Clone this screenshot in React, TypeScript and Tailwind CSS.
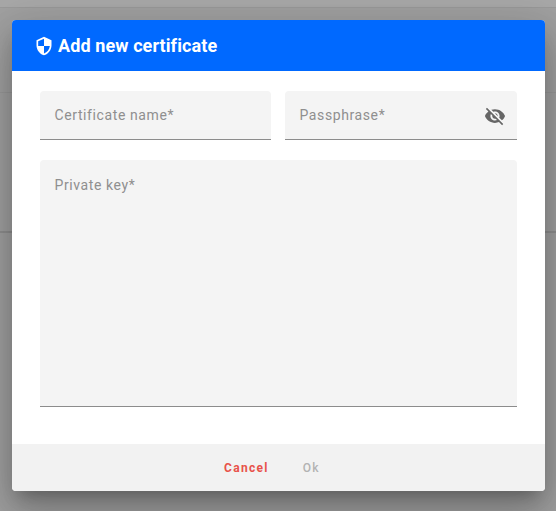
import { MdSecurity, MdVisibilityOff } from "react-icons/md"

function Field({ label, icon, className }: { label: string; icon?: boolean; className: string }) {
  return (
    <div className={`flex justify-between rounded-t bg-[#f4f4f4] border-b border-[#8c8c8c] pl-[14.5px] pr-[11px] ${className}`}>
      <span className="text-[14px] leading-[20px] tracking-[0.6px] text-[#8f8f8f]">{label}</span>
      {icon && <MdVisibilityOff className="w-[22px] h-[22px] text-[#666666]" />}
    </div>
  )
}

export default function App() {
  return (
    <div className="relative h-[511px] overflow-hidden bg-[#a1a1a1] font-['Roboto',sans-serif]">
      <div className="h-[8px] border-b border-[#999999] bg-[#a8a8a8]" />
      <div className="h-[85px] border-b border-[#999999]" />
      <div className="h-[140px] border-b-2 border-[#8f8f8f]" />
      <div className="absolute left-[12px] top-[20px] w-[533px] h-[471px] flex flex-col rounded bg-white overflow-hidden shadow-[0_11px_15px_-7px_rgba(0,0,0,0.25),0_24px_38px_3px_rgba(0,0,0,0.16),0_9px_46px_8px_rgba(0,0,0,0.12)]">
        <div className="flex items-center h-[51px] pl-[22px] gap-[4px] bg-[#0069ff] text-white">
          <MdSecurity className="w-[20px] h-[20px]" />
          <span className="text-[18px] tracking-[0.1px] font-bold">Add new certificate</span>
        </div>
        <div className="flex-1 px-[28px] pt-[20px]">
          <div className="flex gap-[14px]">
            <Field label="Certificate name*" className="w-[231px] h-[49px] pt-[14px]" />
            <Field label="Passphrase*" icon className="w-[232px] h-[49px] pt-[14px]" />
          </div>
          <Field label="Private key*" className="mt-[20px] h-[247px] pt-[15px]" />
        </div>
        <div className="flex justify-center items-center gap-[34px] h-[47px] bg-[#f2f2f2] pr-[13px] text-[12px] tracking-[1.3px]">
          <span className="font-bold text-[#e8524a]">Cancel</span>
          <span className="font-medium text-[#b3b3b3]">Ok</span>
        </div>
      </div>
    </div>
  )
}
